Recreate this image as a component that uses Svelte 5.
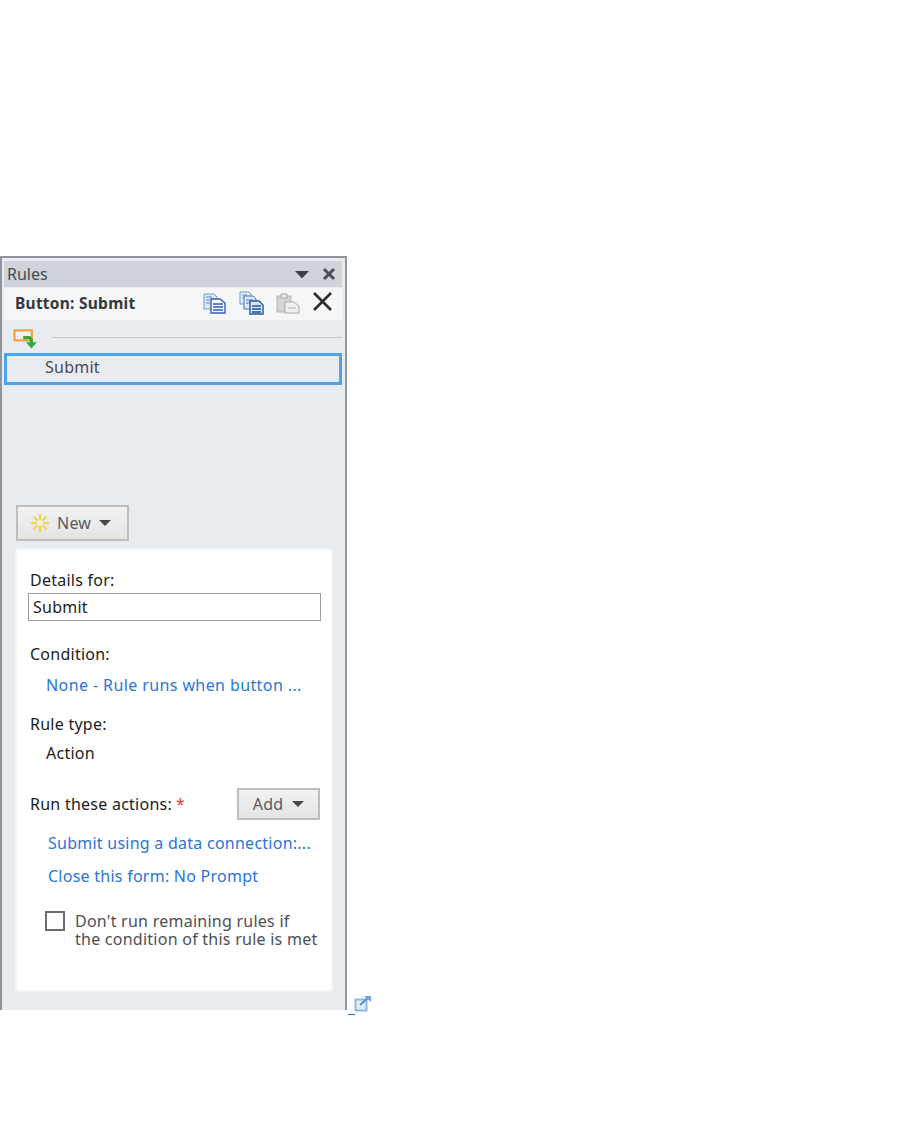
<script>
	const actions = ['Submit using a data connection:...', 'Close this form: No Prompt'];
</script>

<main class="page">
	<aside class="panel">
		<header class="title-bar">
			<span class="title">Rules</span>
			<span class="title-tools">
				<svg width="16" height="9" viewBox="0 0 16 9"><path d="M1 1h14L8 8.500z" fill="#3c3f44" /></svg>
				<svg width="14" height="14" viewBox="0 0 14 14"><path d="M2 2l10 10M12 2L2 12" stroke="#4a4f55" stroke-width="3" /></svg>
			</span>
		</header>

		<div class="sub-bar">
			<strong>Button: Submit</strong>
			<span class="sub-tools">
				<!-- copy -->
				<svg width="24" height="22" viewBox="0 0 24 22">
					<path d="M1 2h10l3 3v12H1z" fill="#dfe9f7" stroke="#6f97cf" />
					<path d="M3 5h6M3 8h4M3 11h4" stroke="#5f8ccb" />
					<path d="M8 7h9l5 4v10H8z" fill="#f6f9fd" stroke="#2f62ab" stroke-width="1.400" />
					<path d="M10 12h10M10 15h10M10 18h10" stroke="#2f62ab" stroke-width="1.400" />
				</svg>
				<!-- copy all -->
				<svg width="25" height="24" viewBox="0 0 25 24">
					<path d="M1 1h9l2 2v10H1z" fill="#e6eefa" stroke="#6f97cf" />
					<path d="M3 4h5M3 7h2" stroke="#6f97cf" />
					<path d="M5 5h9l3 3v10H5z" fill="#dfe9f7" stroke="#3f70b8" />
					<path d="M7 9h7M7 12h3" stroke="#3f70b8" />
					<path d="M11 10h9l4 4v9H11z" fill="#dce8f8" stroke="#2458a5" stroke-width="1.400" />
					<path d="M13 15h9M13 18h9M13 21h9" stroke="#1f52a0" stroke-width="1.600" />
				</svg>
				<!-- paste, disabled -->
				<svg width="24" height="22" viewBox="0 0 24 22">
					<path d="M1 4h14v16H1z" fill="#d4d4d4" stroke="#b5b5b5" />
					<path d="M5 2h6v4H5z" fill="#e6e6e6" stroke="#a8a8a8" />
					<path d="M9 10h9l5 4v7H9z" fill="#efefef" stroke="#a8a8a8" />
					<path d="M12 16h8" stroke="#b0b0b0" />
				</svg>
				<svg class="delete" width="21" height="21" viewBox="0 0 21 21"><path d="M2 2l17 17M19 2L2 19" stroke="#2d2d2d" stroke-width="2.600" /></svg>
			</span>
		</div>

		<div class="rule-head">
			<svg width="24" height="20" viewBox="0 0 26 22">
				<rect x="1.500" y="1.500" width="19" height="11" fill="#eef0f8" stroke="#f0a23c" stroke-width="2.400" />
				<path d="M11 9.500h6a3 3 0 0 1 3 3v3" fill="none" stroke="#35a83c" stroke-width="3.500" />
				<path d="M14 14.500h12l-6 7z" fill="#35a83c" />
			</svg>
			<span class="rule-line"></span>
		</div>
		<div class="rule-row">Submit</div>

		<button class="btn new" type="button">
			<svg width="20" height="20" viewBox="0 0 20 20">
				<g stroke="#f5d04e" stroke-width="2">
					<path d="M10 1v6M10 13v6M1 10h6M13 10h6M3.500 3.500l4 4M12.500 12.500l4 4M16.500 3.500l-4 4M7.500 12.500l-4 4" />
				</g>
				<circle cx="10" cy="10" r="1.800" fill="#fff3b0" />
			</svg>
			<span>New</span>
			<i class="caret"></i>
		</button>

		<section class="details">
			<label class="label" for="rule-name">Details for:</label>
			<input id="rule-name" class="name" value="Submit" readonly />

			<p class="label condition">Condition:</p>
			<a class="link condition-link" href="#condition">None - Rule runs when button ...</a>

			<p class="label type">Rule type:</p>
			<p class="type-value">Action</p>

			<div class="actions-head">
				<span class="label">Run these actions:<em>*</em></span>
				<button class="btn add" type="button"><span>Add</span><i class="caret"></i></button>
			</div>

			<ul class="actions">
				{#each actions as action}
					<li><a class="link" href="#action">{action}</a></li>
				{/each}
			</ul>

			<div class="stop">
				<span class="check"></span>
				<span class="stop-text">Don't run remaining rules if<br />the condition of this rule is met</span>
			</div>
		</section>
	</aside>

	<a class="popout" href="#open">
		<span class="under"></span>
		<svg width="18" height="18" viewBox="0 0 18 18">
			<rect x="1.500" y="4.500" width="11" height="11" fill="#e3eefa" stroke="#8db8e6" stroke-width="2" />
			<path d="M6 10l8-7" stroke="#4a90d9" stroke-width="2" />
			<path d="M10 1h7v6z" fill="#6aa5e3" />
		</svg>
	</a>
</main>

<style>
	:global(body) {
		margin: 0;
		background: #fff;
	}

	.page {
		display: flex;
		align-items: flex-end;
		height: 1139px;
		box-sizing: border-box;
		padding: 256px 0 129px;
		font-family: 'Noto Sans', 'Open Sans', sans-serif;
		font-size: 16px;
		letter-spacing: 0.25px;
		color: #1c1c1c;
	}

	.panel {
		display: flex;
		flex-direction: column;
		box-sizing: border-box;
		width: 347px;
		height: 754px;
		padding: 3px 3px 0 2px;
		background: #e8ebf0;
		border: 2px solid #8e959d;
		border-bottom: 0;
	}

	.title-bar {
		display: flex;
		justify-content: space-between;
		align-items: center;
		height: 26px;
		padding: 0 6px 0 3px;
		background: #ced4da;
	}

	.title {
		font-size: 16px;
		letter-spacing: 0;
		color: #444b53;
	}

	.title-tools {
		display: flex;
		align-items: center;
		gap: 12px;
	}

	.sub-bar {
		display: flex;
		justify-content: space-between;
		align-items: center;
		height: 32px;
		margin-top: 1px;
		padding: 0 9px 0 11px;
		background: #f4f6f8;
	}

	.sub-bar strong {
		margin-top: -3px;
		font-size: 15.500px;
		font-weight: 700;
		color: #33373c;
	}

	.sub-tools {
		display: flex;
		align-items: center;
		gap: 12px;
		margin-top: -3px;
	}

	.delete {
		margin-top: -2px;
	}

	.rule-head {
		display: flex;
		align-items: center;
		gap: 15px;
		height: 33px;
		padding-left: 9px;
	}

	.rule-head svg {
		margin-top: 4px;
	}

	.rule-line {
		flex: 1;
		height: 1px;
		margin-top: 2px;
		background: #c3c7cb;
	}

	.rule-row {
		box-sizing: border-box;
		height: 32px;
		padding-left: 38px;
		border: 3px solid #4aa5f0;
		line-height: 23px;
		color: #454a50;
	}

	.btn {
		display: inline-flex;
		align-items: center;
		box-sizing: border-box;
		border: 2px solid #bdbdbd;
		background: linear-gradient(#f2f2f2, #e4e4e4);
		font: inherit;
		font-size: 16px;
		letter-spacing: 0.25px;
		color: #555a62;
	}

	.new {
		align-self: flex-start;
		gap: 7px;
		width: 113px;
		height: 36px;
		margin: 120px 0 0 12px;
		padding: 0 0 0 12px;
	}

	.caret {
		width: 0;
		height: 0;
		margin-left: 1px;
		border: 6px solid transparent;
		border-top: 6px solid #44484e;
		border-bottom: 0;
	}

	.details {
		box-sizing: border-box;
		width: 318px;
		height: 444px;
		margin: 7px 0 0 11px;
		padding: 19px 12px 0 13px;
		background: #fff;
		border: 2px solid #f2f3f5;
	}

	.label {
		display: block;
		margin: 0;
		line-height: 22px;
		color: #1c1c1c;
	}

	.label em {
		margin-left: 4px;
		color: #e53935;
		font-style: normal;
	}

	.name {
		display: block;
		box-sizing: border-box;
		width: 293px;
		height: 28px;
		margin: 2px 0 0 -2px;
		padding: 0 4px;
		border: 1.500px solid #9b9ea6;
		outline: 0;
		font: inherit;
		letter-spacing: 0.25px;
		color: #1c1c1c;
	}

	.condition {
		margin-top: 22px;
	}

	.link {
		color: #2a74d8;
		text-decoration: none;
	}

	.condition-link {
		display: block;
		margin: 9px 0 0 16px;
		line-height: 22px;
		letter-spacing: 0.4px;
	}

	.type {
		margin-top: 17px;
	}

	.type-value {
		margin: 7px 0 0 16px;
		line-height: 22px;
	}

	.actions-head {
		display: flex;
		justify-content: space-between;
		align-items: center;
		margin-top: 24px;
		width: 290px;
	}

	.add {
		justify-content: center;
		gap: 8px;
		width: 83px;
		height: 32px;
		padding: 0;
	}

	.actions {
		display: flex;
		flex-direction: column;
		gap: 11px;
		margin: 12px 0 0 18px;
		padding: 0;
		list-style: none;
		line-height: 22px;
	}

	.stop {
		display: flex;
		gap: 10px;
		margin: 24px 0 0 15px;
		line-height: 18px;
		color: #4b4f55;
	}

	.stop-text {
		margin-top: 1px;
	}

	.check {
		box-sizing: border-box;
		flex: none;
		width: 20px;
		height: 20px;
		border: 2px solid #6d6d6d;
		background: #fff;
	}

	.popout {
		display: flex;
		align-items: flex-end;
		margin: 0 0 -5px 1px;
		height: 18px;
	}

	.popout svg {
		margin: 0 0 2px -1px;
	}

	.under {
		width: 7px;
		height: 1px;
		background: #1878b8;
	}
</style>
